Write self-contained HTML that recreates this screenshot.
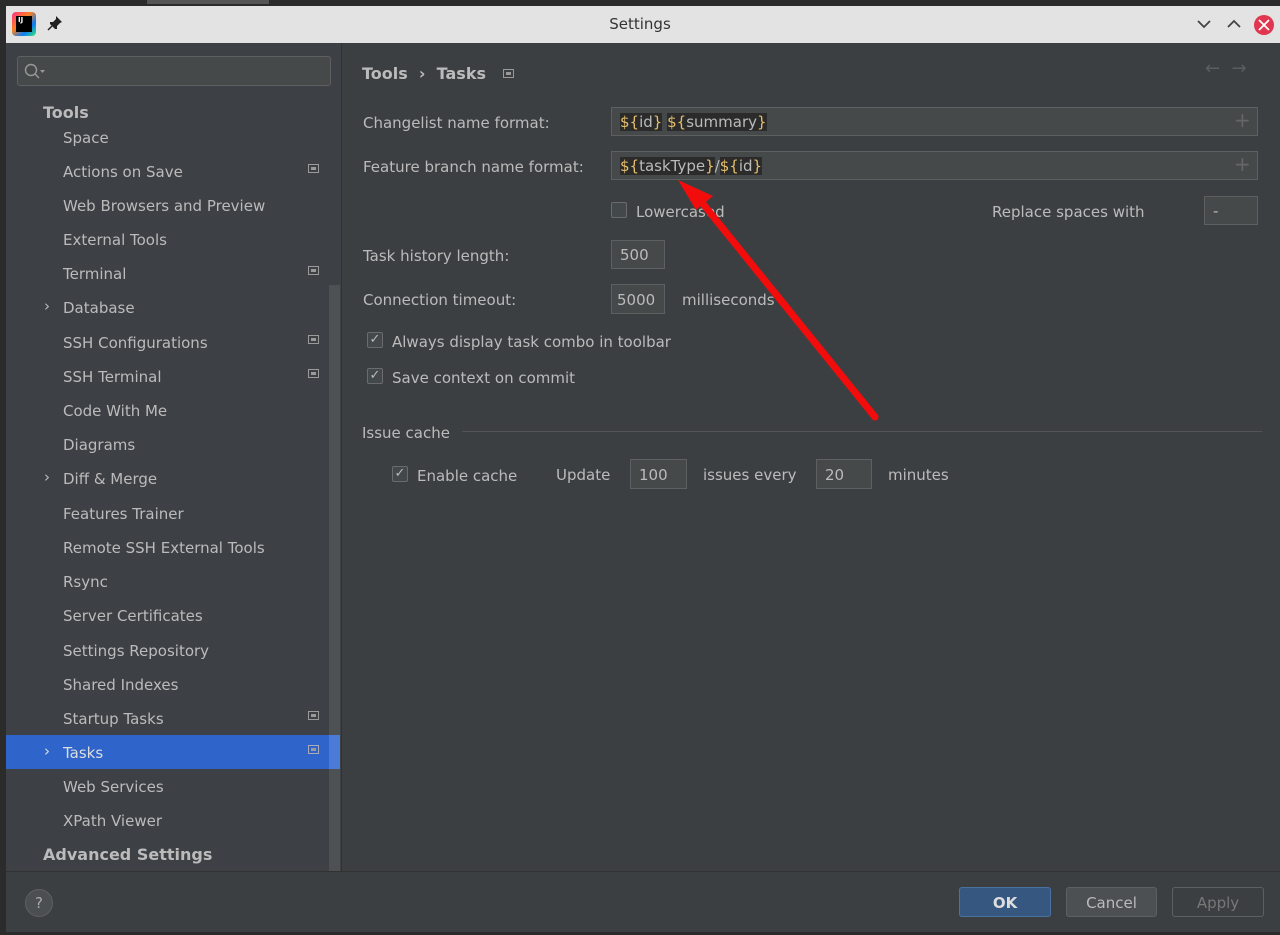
<!DOCTYPE html>
<html><head><meta charset="utf-8"><style>
*{margin:0;padding:0;box-sizing:border-box}
body{width:1280px;height:935px;background:#2b2b2b;font-family:"DejaVu Sans","Liberation Sans",sans-serif;font-size:15px;color:#bbbbbb;position:relative;overflow:hidden}
.a{position:absolute;white-space:nowrap}
.t{margin-top:2px}
.win{position:absolute;left:6px;top:6px;width:1274px;height:926px;background:#3c3f41}
.title{position:absolute;left:6px;top:6px;width:1274px;height:37px;background:#e3e3e3}
.side{position:absolute;left:6px;top:43px;width:335px;height:828px;background:#3d4045}
.si{position:absolute;left:63px;color:#bbbbbb;margin-top:2px}
.ic{position:absolute;left:308px;width:11px;height:9px;border:1px solid #9a9a9a}
.ic:after{content:"";position:absolute;left:2px;top:2px;width:5px;height:3px;background:#9a9a9a}
.fld{position:absolute;border:1px solid #5e6060;background:#45494a;color:#bbbbbb;padding-left:8px}
.cb{position:absolute;width:16px;height:16px;border:1px solid #6b6b6b;background:#43494a;border-radius:2px;color:#bbb;font-size:13px;line-height:14px;text-align:center}
.v{color:#e8bf6a;background:#2b2b2b}
.btn{position:absolute;top:887px;height:30px;border:1px solid #5e6060;border-radius:3px;text-align:center;line-height:30px;font-size:15px}
</style></head><body>
<div class="a" style="left:147px;top:0;width:122px;height:4px;background:#555"></div>
<div class="win"></div>
<div class="title"></div>
<div class="a" style="left:12px;top:12px;width:24px;height:24px;background:linear-gradient(135deg,#ff318c,#fc801d 40%,#087cfa 70%,#3bea62);border-radius:4px"></div>
<div class="a" style="left:16px;top:16px;width:16px;height:16px;background:#000;color:#fff;font-size:7px;font-weight:bold;padding-left:2px;line-height:9px">IJ</div>
<svg class="a" style="left:46px;top:14px" width="18" height="18"><path d="M10 2l6 6-2 1-3 3 0 3-2 0-5-5 0-2 3 0 3-3z" fill="#222"/><path d="M6 12l-4 4" stroke="#222" stroke-width="1.5"/></svg>
<div class="a" style="left:0;width:1280px;top:15px;text-align:center;color:#333;font-size:15px">Settings</div>
<svg class="a" style="left:1194px;top:14px" width="80" height="24"><path d="M4 7l6 6 6-6" stroke="#444" stroke-width="1.8" fill="none"/><path d="M34 13l6-6 6 6" stroke="#444" stroke-width="1.8" fill="none"/><circle cx="70" cy="11" r="10" fill="#e0364f"/><path d="M65 6l10 10M75 6l-10 10" stroke="#fff" stroke-width="1.8"/></svg>
<div class="side"></div>
<div class="a" style="left:17px;top:56px;width:314px;height:30px;border:1px solid #5e6060;border-radius:3px;background:#45494a"></div>
<svg class="a" style="left:23px;top:62px" width="24" height="18"><circle cx="8" cy="8" r="5.5" stroke="#999" stroke-width="1.4" fill="none"/><path d="M12 12l4 4" stroke="#999" stroke-width="1.4"/><path d="M17 8h5l-2.5 3z" fill="#999"/></svg>
<div class="a t" style="left:43px;top:101px;font-weight:bold;font-size:16px;color:#bbb">Tools</div>
<div class="a" style="left:329px;top:285px;width:11px;height:586px;background:#4e5153"></div>
<div class="a" style="left:6px;top:735px;width:334px;height:34px;background:#2f65ca"></div>
<div class="a" style="left:329px;top:735px;width:11px;height:34px;background:#4a7bd6"></div>
<div class="a" style="left:341px;top:43px;width:1px;height:828px;background:#323232"></div>
<div class="si" style="top:127px">Space</div>
<div class="si" style="top:161px">Actions on Save</div><div class="ic" style="top:164px"></div>
<div class="si" style="top:195px">Web Browsers and Preview</div>
<div class="si" style="top:229px">External Tools</div>
<div class="si" style="top:263px">Terminal</div><div class="ic" style="top:266px"></div>
<div class="si" style="top:297px">Database</div><div class="a" style="left:44px;top:297px">›</div>
<div class="si" style="top:332px">SSH Configurations</div><div class="ic" style="top:335px"></div>
<div class="si" style="top:366px">SSH Terminal</div><div class="ic" style="top:369px"></div>
<div class="si" style="top:400px">Code With Me</div>
<div class="si" style="top:434px">Diagrams</div>
<div class="si" style="top:468px">Diff &amp; Merge</div><div class="a" style="left:44px;top:468px">›</div>
<div class="si" style="top:503px">Features Trainer</div>
<div class="si" style="top:537px">Remote SSH External Tools</div>
<div class="si" style="top:571px">Rsync</div>
<div class="si" style="top:605px">Server Certificates</div>
<div class="si" style="top:640px">Settings Repository</div>
<div class="si" style="top:674px">Shared Indexes</div>
<div class="si" style="top:708px">Startup Tasks</div><div class="ic" style="top:711px"></div>
<div class="si" style="top:742px;color:#ddd">Tasks</div><div class="a" style="left:44px;top:742px;color:#ddd">›</div><div class="ic" style="top:745px;border-color:#aab;"></div>
<div class="si" style="top:776px">Web Services</div>
<div class="si" style="top:810px">XPath Viewer</div>
<div class="a t" style="left:43px;top:843px;font-weight:bold;font-size:16px">Advanced Settings</div>

<div class="a t" style="left:362px;top:62px;font-weight:bold;font-size:16px">Tools &nbsp;›&nbsp; Tasks</div>
<div class="ic" style="left:503px;top:69px"></div>
<div class="a" style="left:1205px;top:58px;color:#5b5e60;font-size:18px">← &nbsp;→</div>

<div class="a t" style="left:363px;top:112px">Changelist name format:</div>
<div class="fld" style="left:611px;top:107px;width:647px;height:29px;line-height:29px"><span class="v">${<span style="color:#bbb">id</span>}</span> <span class="v">${<span style="color:#bbb">summary</span>}</span></div>
<div class="a" style="left:1234px;top:108px;color:#666;font-size:20px">+</div>
<div class="a t" style="left:363px;top:156px">Feature branch name format:</div>
<div class="fld" style="left:611px;top:151px;width:647px;height:29px;line-height:29px"><span class="v">${<span style="color:#bbb">taskType</span>}</span>/<span class="v">${<span style="color:#bbb">id</span>}</span></div>
<div class="a" style="left:1234px;top:152px;color:#666;font-size:20px">+</div>
<div class="cb" style="left:611px;top:202px"></div>
<div class="a t" style="left:636px;top:201px">Lowercased</div>
<div class="a t" style="left:992px;top:201px">Replace spaces with</div>
<div class="fld" style="left:1204px;top:196px;width:54px;height:29px;line-height:29px">-</div>
<div class="a t" style="left:363px;top:245px">Task history length:</div>
<div class="fld" style="left:611px;top:240px;width:54px;height:29px;line-height:29px">500</div>
<div class="a t" style="left:363px;top:289px">Connection timeout:</div>
<div class="fld" style="left:611px;top:284px;width:54px;height:30px;line-height:30px;padding-left:5px">5000</div>
<div class="a t" style="left:682px;top:289px">milliseconds</div>
<div class="cb" style="left:367px;top:332px">✓</div>
<div class="a t" style="left:392px;top:331px">Always display task combo in toolbar</div>
<div class="cb" style="left:367px;top:368px">✓</div>
<div class="a t" style="left:392px;top:367px">Save context on commit</div>
<div class="a t" style="left:362px;top:422px">Issue cache</div>
<div class="a" style="left:462px;top:431px;width:800px;height:1px;background:#545454"></div>
<div class="cb" style="left:392px;top:466px">✓</div>
<div class="a t" style="left:417px;top:465px">Enable cache</div>
<div class="a t" style="left:556px;top:464px">Update</div>
<div class="fld" style="left:630px;top:459px;width:57px;height:30px;line-height:30px">100</div>
<div class="a t" style="left:703px;top:464px">issues every</div>
<div class="fld" style="left:816px;top:459px;width:56px;height:30px;line-height:30px">20</div>
<div class="a t" style="left:888px;top:464px">minutes</div>

<div class="a" style="left:6px;top:871px;width:1274px;height:1px;background:#323232"></div>
<div class="a" style="left:25px;top:889px;width:28px;height:28px;border-radius:50%;background:#4c4f51;border:1px solid #5e6060;text-align:center;line-height:26px;color:#aaa">?</div>
<div class="btn" style="left:959px;width:92px;background:#365880;border-color:#4a72a0;color:#ddd;font-weight:bold">OK</div>
<div class="btn" style="left:1066px;width:91px;background:#4c5052;color:#bbb">Cancel</div>
<div class="btn" style="left:1172px;width:92px;background:#3c3f41;color:#777">Apply</div>
<svg class="a" style="left:0;top:0" width="1280" height="935"><path d="M875 417L695 194" stroke="#f20c0c" stroke-width="7" stroke-linecap="round"/><path d="M678 180L713 196 696 210z" fill="#f20c0c"/></svg>
</body></html>
